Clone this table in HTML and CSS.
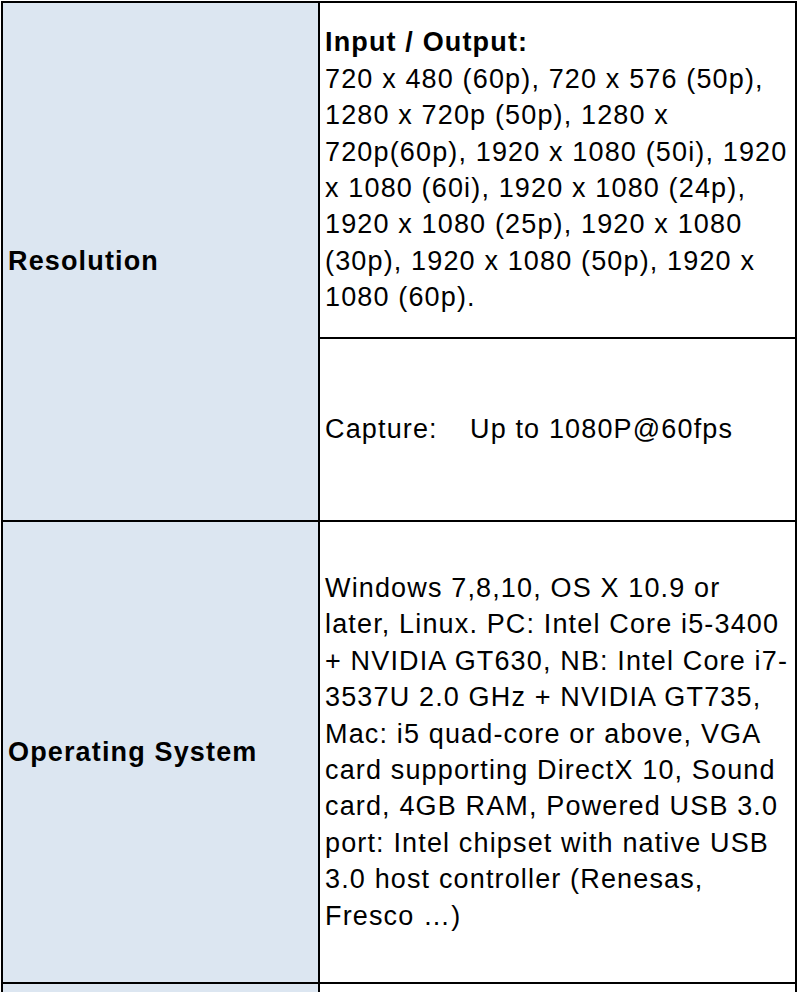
FILE: index.html
```html
<!DOCTYPE html>
<html lang="en">
<head>
<meta charset="utf-8">
<title>Specifications</title>
<link rel="stylesheet" href="styles.css">
</head>
<body>
<div class="spec">
  <div class="cell label span2">Resolution</div>
  <div class="cell value">
    <p><strong>Input / Output:</strong><br>720 x 480 (60p), 720 x 576 (50p), 1280 x 720p (50p), 1280 x 720p(60p), 1920 x 1080 (50i), 1920 x 1080 (60i), 1920 x 1080 (24p), 1920 x 1080 (25p), 1920 x 1080 (30p), 1920 x 1080 (50p), 1920 x 1080 (60p).</p>
  </div>
  <div class="cell value">
    <p><span class="cap-label">Capture:</span>Up to 1080P@60fps</p>
  </div>
  <div class="cell label">Operating System</div>
  <div class="cell value">
    <p>Windows 7,8,10, OS X 10.9 or later, Linux. PC: Intel Core i5-3400 + NVIDIA GT630, NB: Intel Core i7-3537U 2.0 GHz + NVIDIA GT735, Mac: i5 quad-core or above, VGA card supporting DirectX 10, Sound card, 4GB RAM, Powered USB 3.0 port: Intel chipset with native USB 3.0 host controller (Renesas, Fresco …)</p>
  </div>
  <div class="cell label"></div>
  <div class="cell value"></div>
</div>
</body>
</html>
```

FILE: styles.css
```css
html, body {
  margin: 0;
  padding: 0;
  background: #ffffff;
}

.spec {
  margin: 1px 0 0 1px;
  width: 796px;
  box-sizing: border-box;
  display: grid;
  grid-template-columns: 315px 1fr;
  grid-template-rows: 334px 181px 460px 120px;
  gap: 2px;
  padding: 2px;
  background: #000000;
  font-family: "Liberation Sans", Arial, sans-serif;
  font-size: 27px;
  letter-spacing: 1.15px;
  line-height: 36.4px;
  color: #000000;
}

.cell {
  display: flex;
  align-items: center;
  box-sizing: border-box;
}

.cell p {
  margin: 0;
}

.label {
  background: #dce6f1;
  font-weight: bold;
  padding-left: 5px;
}

.span2 {
  grid-row: span 2;
}

.value {
  background: #ffffff;
  padding: 0 5px 0 5px;
}

.cap-label {
  display: inline-block;
  width: 145px;
}
```
